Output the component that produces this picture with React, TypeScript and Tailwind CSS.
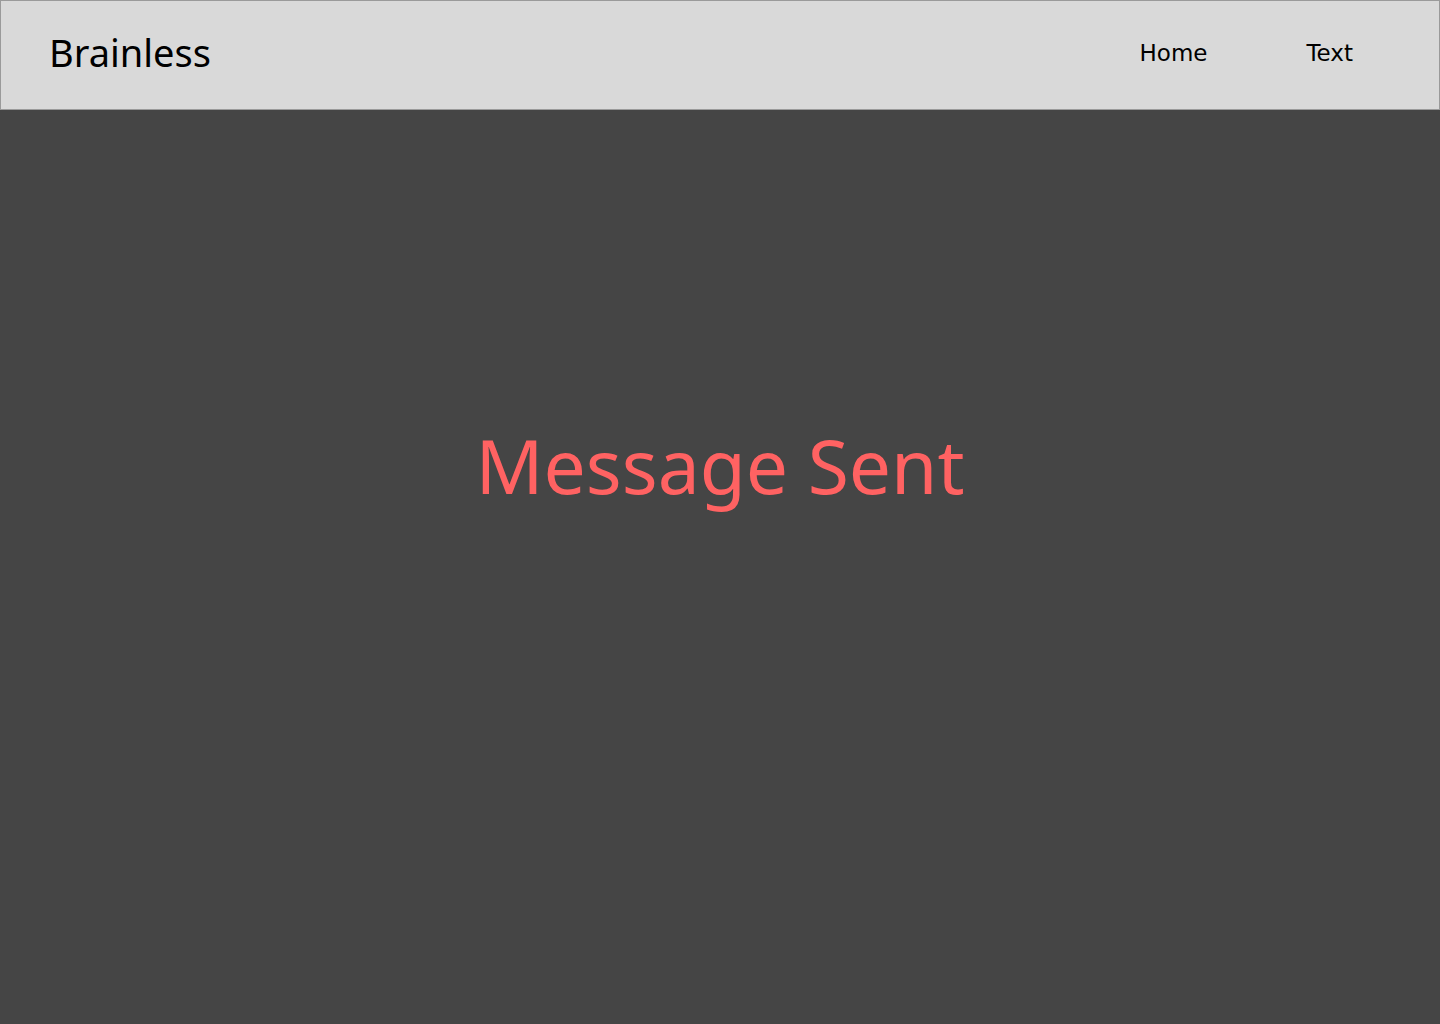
export default function App() {
  return (
    <div className="flex min-h-screen w-full flex-col bg-[#454545]">
      <header className="flex h-[110px] items-center justify-between border border-[#9a9a9a] bg-[#d9d9d9] pl-12 pr-[86px]">
        <h1
          className="pb-[6px] text-[38px] leading-none text-black"
          style={{ fontFamily: '"Noto Sans", sans-serif' }}
        >
          Brainless
        </h1>
        <nav
          className="flex items-center gap-[99px] pb-[4px] text-[23px] text-black"
          style={{ fontFamily: '"DejaVu Sans", sans-serif' }}
        >
          <a href="#">Home</a>
          <a href="#">Text</a>
        </nav>
      </header>

      <main className="flex h-[914px] items-center justify-center pb-[204px]">
        <p className="text-[75px] text-[#ff6262]" style={{ fontFamily: '"Noto Sans", sans-serif' }}>
          Message Sent
        </p>
      </main>
    </div>
  );
}
